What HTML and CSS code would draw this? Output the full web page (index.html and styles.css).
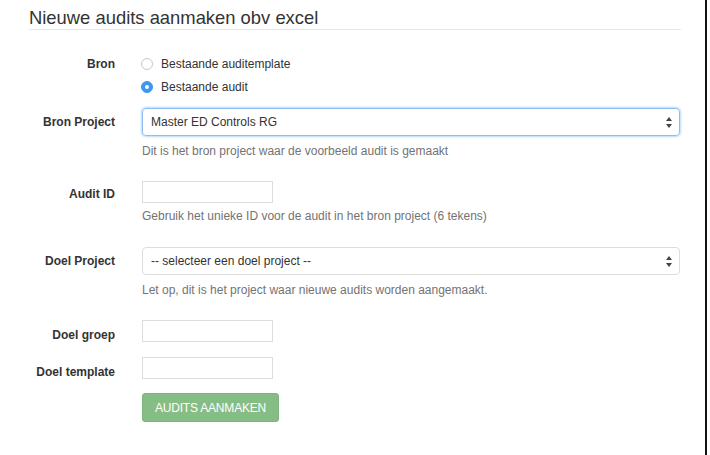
FILE: index.html
```html
<!DOCTYPE html>
<html>
<head>
<meta charset="utf-8">
<link rel="stylesheet" href="styles.css">
</head>
<body>
<div class="page">
  <h1 class="title">Nieuwe audits aanmaken obv excel</h1>
  <form class="form">
    <div class="row row-bron">
      <label class="lbl">Bron</label>
      <div class="ctl radios">
        <div class="radio"><span class="rdo"></span>Bestaande auditemplate</div>
        <div class="radio"><span class="rdo on"></span>Bestaande audit</div>
      </div>
    </div>
    <div class="row row-bronproj">
      <label class="lbl">Bron Project</label>
      <div class="ctl">
        <div class="select focus"><span>Master ED Controls RG</span><span class="arrows"><svg width="6" height="11" viewBox="0 0 6 11"><path d="M3 0 L6 4 L0 4 Z M3 11 L6 7 L0 7 Z" fill="#444"/></svg></span></div>
        <div class="help">Dit is het bron project waar de voorbeeld audit is gemaakt</div>
      </div>
    </div>
    <div class="row row-auditid">
      <label class="lbl">Audit ID</label>
      <div class="ctl">
        <div class="input"></div>
        <div class="help help2">Gebruik het unieke ID voor de audit in het bron project (6 tekens)</div>
      </div>
    </div>
    <div class="row row-doelproj">
      <label class="lbl">Doel Project</label>
      <div class="ctl">
        <div class="select"><span>-- selecteer een doel project --</span><span class="arrows"><svg width="6" height="11" viewBox="0 0 6 11"><path d="M3 0 L6 4 L0 4 Z M3 11 L6 7 L0 7 Z" fill="#444"/></svg></span></div>
        <div class="help">Let op, dit is het project waar nieuwe audits worden aangemaakt.</div>
      </div>
    </div>
    <div class="row row-groep">
      <label class="lbl">Doel groep</label>
      <div class="ctl"><div class="input"></div></div>
    </div>
    <div class="row row-tmpl">
      <label class="lbl">Doel template</label>
      <div class="ctl"><div class="input"></div></div>
    </div>
    <div class="row row-btn">
      <span class="lbl"></span>
      <div class="ctl"><button type="button" class="btn">AUDITS AANMAKEN</button></div>
    </div>
  </form>
</div>
<div class="edge"></div>
</body>
</html>
```
FILE: styles.css
```css
html, body { margin: 0; padding: 0; background: #fff; }
body {
  font-family: "Liberation Sans", Arial, sans-serif;
  font-size: 12px;
  color: #333;
  width: 710px;
  height: 455px;
  overflow: hidden;
  position: relative;
}
.page {
  padding: 0 29px 0 29px;
  width: 652px;
}
.title {
  font-weight: normal;
  font-size: 18.4px;
  color: #333;
  margin: 0;
  padding-top: 7px;
  line-height: 21px;
  padding-bottom: 1px;
  border-bottom: 1px solid #e8e8e8;
}
.form { padding-top: 27px; }
.row {
  display: grid;
  grid-template-columns: 86px 538px;
  column-gap: 27px;
}
.lbl {
  text-align: right;
  font-weight: bold;
  color: #333;
}
.radios { display: flex; flex-direction: column; gap: 9px; margin-left: -1px; }
.radio { display: flex; align-items: center; height: 14px; line-height: 14px; }
.row-bron .lbl { line-height: 14px; padding-top: 0; }
.rdo {
  width: 10px; height: 10px;
  border: 1px solid #c9c9c9;
  border-radius: 50%;
  margin-right: 8px;
  background: #fff;
  box-sizing: content-box;
  display: inline-block;
  position: relative;
}
.rdo.on { background: #3d95f5; border-color: #3d95f5; }
.rdo.on::after {
  content: "";
  position: absolute;
  left: 3px; top: 3px;
  width: 4px; height: 4px;
  border-radius: 50%;
  background: #fff;
}
.row-bronproj { margin-top: 14px; }
.row-bronproj .lbl, .row-doelproj .lbl { line-height: 28px; }
.select {
  height: 26px;
  border: 1px solid #ddd;
  border-radius: 4px;
  display: flex;
  align-items: center;
  justify-content: space-between;
  padding: 0 7px 0 8px;
  color: #333;
  font-size: 12px;
}
.select.focus {
  border-color: #8dbdf0;
  box-shadow: 0 0 2px 1px rgba(102, 175, 233, 0.45);
}
.arrows { display: flex; align-items: center; }
.help {
  color: #737373;
  margin-top: 8px;
  line-height: 14px;
}
.row-auditid { margin-top: 23px; }
.row-auditid .lbl { line-height: 23px; padding-top: 2px; }
.input {
  width: 129px;
  height: 20px;
  border: 1px solid #ddd;
}
.help2 { margin-top: 6px; }
.row-doelproj { margin-top: 24px; }
.row-groep { margin-top: 23px; }
.row-groep .lbl, .row-tmpl .lbl { line-height: 22px; padding-top: 4px; margin-bottom: -4px; }
.row-tmpl { margin-top: 15px; }
.row-btn { margin-top: 14px; }
.btn {
  width: 137px;
  height: 29px;
  border: 1px solid #7db47d;
  border-radius: 3px;
  background: #85bd85;
  color: #fff;
  font-family: "Liberation Sans", Arial, sans-serif;
  font-size: 12px;
  padding: 0;
  letter-spacing: -0.2px;
}
.edge {
  position: absolute;
  left: 705px;
  top: 0;
  width: 2px;
  height: 455px;
  background: #111;
}
```
